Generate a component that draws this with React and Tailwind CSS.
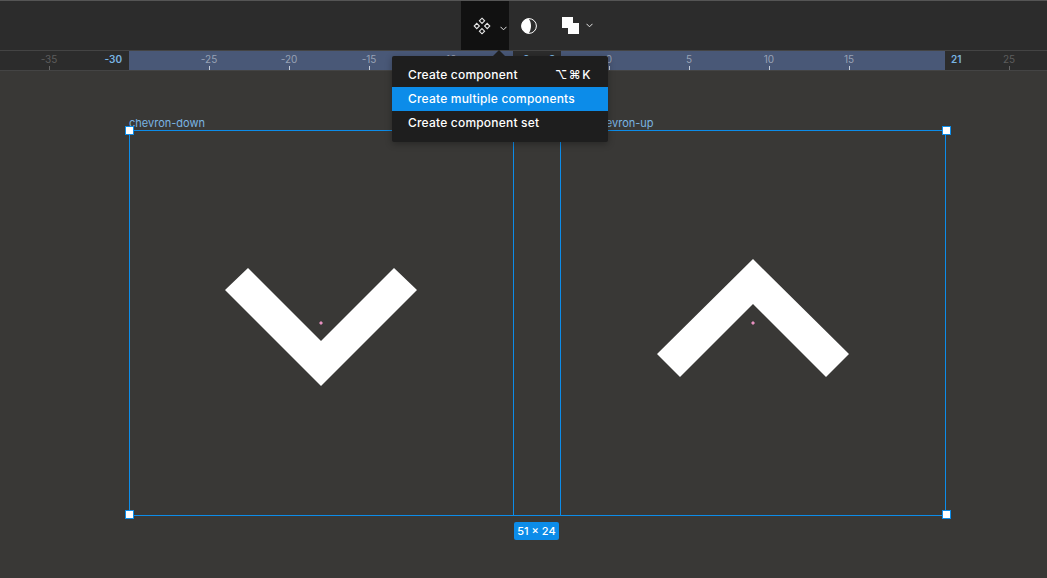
import React from 'react';

const ticks = [-35, -25, -20, -15, -10, 0, 5, 10, 15, 25];
const unit = 16;
const originX = 609;

const ComponentIcon = () => (
  <svg width="18" height="18" viewBox="0 0 18 18" fill="none" stroke="#e6e6e6" strokeWidth="1.1">
    <path d="M9 1.2 11.6 3.8 9 6.4 6.4 3.8Z" />
    <path d="M9 11.6 11.6 14.2 9 16.8 6.4 14.2Z" />
    <path d="M3.8 6.4 6.4 9 3.8 11.6 1.2 9Z" />
    <path d="M14.2 6.4 16.8 9 14.2 11.6 11.6 9Z" />
  </svg>
);

const ContrastIcon = () => (
  <svg width="16" height="16" viewBox="0 0 16 16">
    <circle cx="8" cy="8" r="7.4" fill="none" stroke="#fff" strokeWidth="1" />
    <path d="M7.5 .6C3.5 .9 .6 4 .6 8s2.9 7.1 6.9 7.4c1.6-1.7 2.5-4.6 2.5-7.4S9.100 2.300 7.500 .6Z" fill="#fff" />
  </svg>
);

const Chevron = () => (
  <svg width="7" height="5" viewBox="0 0 7 5" fill="none" stroke="#e6e6e6" strokeWidth="1">
    <path d="M.5 .8 3.500 3.800 6.500 .8" />
  </svg>
);

const Handle = ({ className }) => (
  <div className={`absolute w-[7px] h-[7px] bg-white border border-[#0c8ce9] box-content ${className}`} />
);

const Toolbar = () => (
  <div className="h-[50px] shrink-0 bg-[#2c2c2c] border-t border-[#555] flex items-stretch pl-[461px]">
    <div className="w-[48px] bg-[#111111] flex items-center pl-[12px] gap-[9px]">
      <ComponentIcon />
      <div className="mt-[5px] flex"><Chevron /></div>
    </div>
    <div className="w-[40px] flex items-center justify-center">
      <ContrastIcon />
    </div>
    <div className="flex items-center pl-[13px] gap-[7px]">
      <svg width="17" height="17" viewBox="0 0 17 17" fill="#fff">
        <rect x="0" y="0" width="11" height="11" />
        <rect x="6" y="6" width="11" height="11" />
      </svg>
      <div className="mb-[1px] flex"><Chevron /></div>
    </div>
  </div>
);

const Ruler = () => (
  <div className="relative h-[21px] shrink-0 bg-[#2c2c2c] border-t border-b border-[#444] overflow-hidden font-['Inter',sans-serif] text-[10px] leading-[12px]">
    <div className="absolute left-[129px] w-[816px] top-0 bottom-0 bg-[#495877]" />
    <div className="absolute left-[513px] w-[48px] top-0 bottom-0 bg-[#2c2c2c]" />
    {ticks.map((t) => {
      const left = originX + t * unit;
      return (
        <React.Fragment key={t}>
          <span
            className={`absolute top-[2px] -translate-x-1/2 ${left > 129 && left < 945 ? 'text-[#98a2b5]' : 'text-[#5c5c5c]'}`}
            style={{ left }}
          >
            {t}
          </span>
          <div
            className={`absolute bottom-0 h-[4px] w-px ${left > 129 && left < 945 ? 'bg-[#c3cad6]' : 'bg-[#666]'}`}
            style={{ left }}
          />
        </React.Fragment>
      );
    })}
    <span className="absolute top-[2px] right-[925px] font-semibold text-[#79b4e2]">-30</span>
    <span className="absolute top-[2px] left-[951px] font-semibold text-[#79b4e2]">21</span>
    <span className="absolute top-[2px] left-[523px] font-semibold text-[#79b4e2]">0</span>
    <span className="absolute top-[2px] left-[549px] font-semibold text-[#79b4e2]">3</span>
  </div>
);

const Menu = () => (
  <div className="absolute left-[392px] top-[56px] w-[216px] bg-[#1e1e1e] rounded-[2px] py-[7px] shadow-[0_2px_7px_rgba(0,0,0,0.3)] font-['Inter',sans-serif] text-[12px] font-medium tracking-[0.2px] text-white">
    <div className="absolute -top-[6px] left-[101px] w-0 h-0 border-l-[6px] border-r-[6px] border-b-[6px] border-l-transparent border-r-transparent border-b-[#1e1e1e]" />
    <div className="h-[24px] flex items-center justify-between pl-[16px] pr-[16px]">
      <span>Create component</span>
      <span className="tracking-[1.5px]">⌥⌘K</span>
    </div>
    <div className="h-[24px] flex items-center pl-[16px] bg-[#0c8ce9]">Create multiple components</div>
    <div className="h-[24px] flex items-center pl-[16px]">Create component set</div>
  </div>
);

const Canvas = () => (
  <div className="relative flex-1 bg-[#393836]">
    <span className="absolute left-[129px] top-[45px] font-['Inter',sans-serif] text-[11px] leading-[14px] text-[#79b4e2]">chevron-down</span>
    <span className="absolute left-[593px] top-[45px] font-['Inter',sans-serif] text-[11px] leading-[14px] text-[#79b4e2]">chevron-up</span>

    <div className="absolute left-[129px] top-[59px] w-[817px] h-[386px] border border-[#0c8ce9]" />
    <div className="absolute left-[513px] top-[59px] w-px h-[385px] bg-[#0c8ce9]" />
    <div className="absolute left-[560px] top-[59px] w-px h-[385px] bg-[#0c8ce9]" />

    <svg className="absolute left-0 top-0" width="1047" height="508" viewBox="0 70 1047 508" fill="#fff">
      <path d="M225 289 248 267 321 340 394 267 417 289 321 385Z" />
      <path d="M657 353 753 258 849 353 826 376 753 303 680 376Z" />
      <path d="M321 320 323 322 321 324 319 322Z" fill="#e88fc0" />
      <path d="M753 320 755 322 753 324 751 322Z" fill="#e88fc0" />
    </svg>

    <Handle className="left-[125px] top-[55px]" />
    <Handle className="left-[942px] top-[55px]" />
    <Handle className="left-[125px] top-[439px]" />
    <Handle className="left-[942px] top-[439px]" />

    <div className="absolute left-[514px] top-[451px] h-[18px] w-[45px] rounded-[2px] bg-[#0c8ce9] flex items-center justify-center font-['Inter',sans-serif] text-[11px] font-medium text-white">
      51 × 24
    </div>
  </div>
);

export default function App() {
  return (
    <div className="relative w-[1047px] h-[578px] flex flex-col overflow-hidden">
      <Toolbar />
      <Ruler />
      <Canvas />
      <Menu />
    </div>
  );
}
